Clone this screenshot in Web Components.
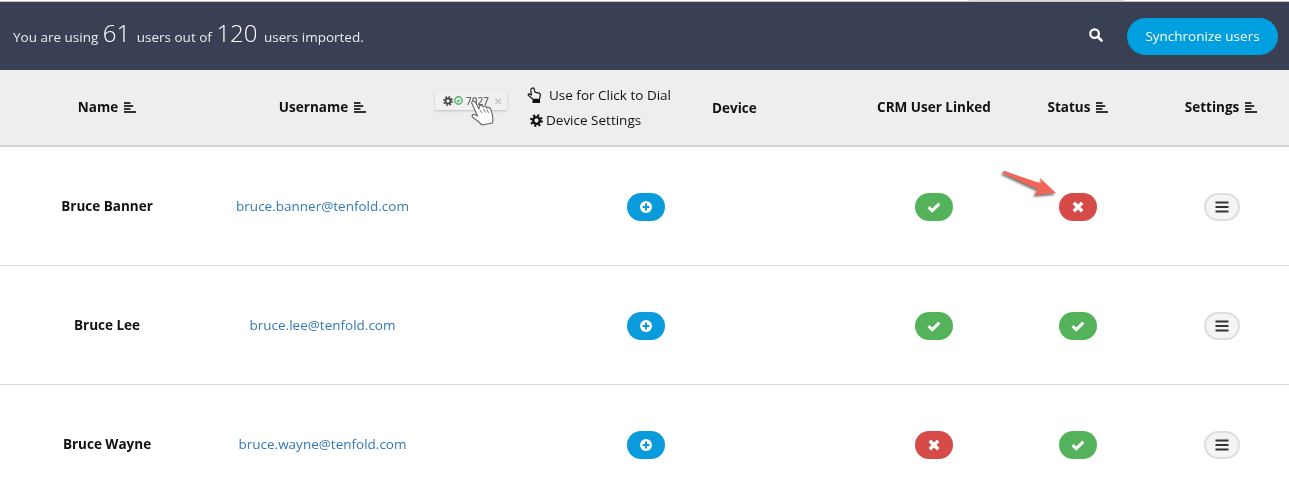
<!DOCTYPE html>
<html lang="en">
<head>
<meta charset="utf-8">
<title>Users</title>
<style>
  html, body { margin: 0; background: #fff; }
  body { filter: blur(.35px); font-family: "Open Sans", sans-serif; height: 481px; overflow: hidden; }
</style>
</head>
<body>
<users-banner used="61" total="120"></users-banner>
<users-head></users-head>
<user-row name="Bruce Banner" email="bruce.banner@tenfold.com" crm="ok" status="off" arrow></user-row>
<user-row name="Bruce Lee" email="bruce.lee@tenfold.com" crm="ok" status="ok"></user-row>
<user-row name="Bruce Wayne" email="bruce.wayne@tenfold.com" crm="off" status="ok"></user-row>

<script>
const COLUMNS = '214px 217px 430px 146px 142px 140px'

const GEAR = (size, color) => /* html */`
  <svg width="${size}" height="${size}" viewBox="0 0 14 14" aria-hidden="true">
    <circle cx="7" cy="7" r="3.6" fill="none" stroke="${color}" stroke-width="2.6"/>
    <circle cx="7" cy="7" r="5.7" fill="none" stroke="${color}" stroke-width="2.4" stroke-dasharray="2.24 2.24"/>
  </svg>`

class SortIcon extends HTMLElement {
  constructor () {
    super()
    this.attachShadow({ mode: 'open' }).innerHTML = /* html */`
    <style>
      :host{ display: inline-flex; margin-left: 6px; }
    </style>
    <svg width="12" height="11" viewBox="0 0 13 11" preserveAspectRatio="none" aria-hidden="true">
      <path fill="#333" d="M0 0h7v2H0zM0 3h10v2H0zM0 6h7v2H0zM0 9h13v2H0z"/>
    </svg>`
  }
}

class PillButton extends HTMLElement {
  constructor () {
    super()
    this.attachShadow({ mode: 'open' })
  }

  connectedCallback () {
    const icons = {
      add: '<circle cx="8" cy="8" r="6"  fill="#fff"/><path fill="#0a9bdc" d="M7 4.600h2V7h2.400v2H9v2.400H7V9H4.600V7H7z"/>',
      ok: '<path fill="none" stroke="#fff" stroke-width="3" d="M2.600 8.200l3.600 3.400 7.200-7"/>',
      off: '<path fill="none" stroke="#fff" stroke-width="3.400" d="M3.800 3.800l8.400 8.400M12.200 3.800l-8.400 8.400"/>',
      menu: '<path fill="#333" d="M1.500 2.600h13v2h-13zM1.500 7h13v2h-13zM1.500 11.400h13v2h-13z"/>'
    }
    this.shadowRoot.innerHTML = /* html */`
    <style>
      :host{
        align-items: center;
        background: var(--pill-bg, #54b35a);
        border: var(--pill-border, 0);
        border-radius: 14px;
        box-sizing: border-box;
        display: inline-flex;
        height: 28px;
        justify-content: center;
        width: var(--pill-width, 38px);
      }
      :host([kind="add"]){ --pill-bg: #0a9bdc; }
      :host([kind="off"]){ --pill-bg: #d64a47; }
      :host([kind="menu"]){ --pill-bg: #f4f4f4; --pill-border: 2px solid #dedede; --pill-width: 36px; }
      svg{ display: block; }
    </style>
    <svg width="16" height="16" viewBox="0 0 16 16" aria-hidden="true">${icons[this.getAttribute('kind')]}</svg>`
  }
}

class UsersBanner extends HTMLElement {
  constructor () {
    super()
    this.attachShadow({ mode: 'open' })
  }

  connectedCallback () {
    this.shadowRoot.innerHTML = /* html */`
    <style>
      :host{
        align-items: center;
        background: #3a4053;
        border-top: 1px solid #c4c5ca;
        box-sizing: border-box;
        color: #e9ebef;
        display: flex;
        font-size: 13.5px;
        height: 69px;
        margin-top: 1px;
        padding: 0 11px 0 13px;
        position: relative;
      }
      .tab{ background: #dcdcd8; height: 1px; left: 969px; position: absolute; top: -2px; width: 155px; }
      p{ margin: 0 0 7px; }
      b{ color: #fff; font-size: 24px; font-weight: 300; margin: 0 3px 0 1px; }
      .search{ display: block; margin: 0 24px 3px auto; }
      button{
        background: #009fdf;
        border: 0;
        border-radius: 19px;
        color: #fff;
        font: 13.5px "Open Sans", sans-serif;
        height: 37px;
        padding: 0;
        width: 151px;
      }
    </style>
    <span class="tab"></span>
    <p>You are using <b>${this.getAttribute('used')}</b> users out of <b>${this.getAttribute('total')}</b> users imported.</p>
    <svg class="search" width="14" height="14" viewBox="0 0 14 14" aria-hidden="true">
      <circle cx="5.600" cy="5.600" r="4.300" fill="none" stroke="#fff" stroke-width="2.200"/>
      <path stroke="#fff" stroke-width="2.600" stroke-linecap="round" d="M9 9l3.600 3.600"/>
    </svg>
    <button>Synchronize users</button>`
  }
}

class UsersHead extends HTMLElement {
  constructor () {
    super()
    this.attachShadow({ mode: 'open' })
  }

  connectedCallback () {
    this.shadowRoot.innerHTML = /* html */`
    <style>
      :host{
        align-items: center;
        background: #eeeeee;
        border-bottom: 2px solid #d4d4d4;
        box-sizing: border-box;
        color: #111;
        display: grid;
        font-size: 13.5px;
        font-weight: 700;
        grid-template-columns: ${COLUMNS};
        height: 77px;
      }
      .th{ align-items: center; display: flex; justify-content: center; margin-top: -1px; }
      .settings{ padding-left: 4px; }
      .dial{ align-items: center; display: flex; font-weight: 400; padding-left: 4px; }
      .chip{
        align-items: center;
        background: #f1f1f1;
        box-shadow: 0 1px 2px #bdbdbd;
        box-sizing: border-box;
        color: #666;
        display: flex;
        font-size: 10px;
        font-weight: 600;
        gap: 1px;
        height: 18px;
        padding-left: 8px;
        position: relative;
        top: -7px;
        width: 72px;
      }
      .chip .x{ color: #c4c4c4; font-size: 10px; margin-left: 4px; }
      .hand{ left: 35px; position: absolute; top: 8px; }
      .dial-text{ display: flex; flex-direction: column; gap: 6px; margin-left: 20px; }
      .line{ align-items: center; display: flex; height: 19px; }
      .device{ font-weight: 700; margin-left: 41px; }
    </style>
    <div class="th">Name<sort-icon></sort-icon></div>
    <div class="th">Username<sort-icon></sort-icon></div>
    <div class="dial">
      <div class="chip">
        ${GEAR(10, '#444')}
        <svg width="9" height="9" viewBox="0 0 9 9" aria-hidden="true">
          <circle cx="4.500" cy="4.500" r="3.700" fill="none" stroke="#4fb06b" stroke-width="1.400"/>
          <path fill="none" stroke="#4fb06b" stroke-width="1.200" d="M2.800 4.600l1.300 1.200 2.100-2.200"/>
        </svg>
        <span style="margin-left:2px">7027</span><span class="x">&#10005;</span>
        <svg class="hand" width="24" height="26" viewBox="0 0 24 26" aria-hidden="true">
          <path fill="#fff" stroke="#666" stroke-width="1.100" stroke-linejoin="round" d="M1.500 2.500C2.500.5 4.500.8 5.500 2.500L9 9l.5-3C11 4.500 12.500 5 13 7l.5-.5C15 5.500 16.500 6 17 8l.5-.5C19 7 20.500 8 21 10c1.500 4 2.500 8 1.500 13L12 25C9 22 7 20 3 17.500 1.500 16.500 2 14 4.500 14.500L7.500 16z"/>
          <path fill="none" stroke="#666" stroke-width=".9" d="M10 10l2 3M13.500 9l2 3.500M17 9.500l1.500 3.500"/>
        </svg>
      </div>
      <div class="dial-text">
        <div class="line">
          <svg width="15" height="17" viewBox="0 0 15 17" aria-hidden="true">
            <path fill="none" stroke="#111" stroke-width="1.200" stroke-linejoin="round" d="M5 1.200c1-.6 2 0 2.200 1l.7 3 4 .9c1 .3 1.700 1 1.500 2l-1 4.200H6L1.300 8.400c-.5-.8.4-1.800 1.400-1.300L4.400 8 3.800 2.800c-.1-.7.500-1.300 1.200-1.600z"/>
            <path fill="#111" d="M5.500 13h7.500v3H5.500z"/>
          </svg>
          <span style="margin-left:7px">Use for Click to Dial</span>
        </div>
        <div class="line">
          <span style="display:flex;margin:0 3px 0 3px">${GEAR(13, '#111')}</span>
          <span>Device Settings</span>
        </div>
      </div>
      <span class="device">Device</span>
    </div>
    <div class="th">CRM User Linked</div>
    <div class="th">Status<sort-icon></sort-icon></div>
    <div class="th settings">Settings<sort-icon></sort-icon></div>`
  }
}

class UserRow extends HTMLElement {
  constructor () {
    super()
    this.attachShadow({ mode: 'open' })
  }

  connectedCallback () {
    const arrow = this.hasAttribute('arrow')
      ? /* html */`
      <svg class="arrow" width="60" height="30" viewBox="0 0 60 30" aria-hidden="true">
        <path fill="#f2665a" d="M1 3l2-2.200L40 13.500 39 8l16 15-22 2 4-5.500z"/>
      </svg>`
      : ''
    this.shadowRoot.innerHTML = /* html */`
    <style>
      :host{
        align-items: center;
        border-bottom: 1px solid #dcdcdc;
        box-sizing: border-box;
        color: #111;
        display: grid;
        font-size: 13.5px;
        grid-template-columns: ${COLUMNS};
        height: 119px;
        position: relative;
      }
      .td{ display: flex; justify-content: center; }
      .pill{ padding-top: 2px; }
      .name{ font-weight: 700; }
      a{ color: #337ab7; text-decoration: none; }
      .settings{ box-sizing: border-box; padding-left: 6px; }
      .arrow{ filter: drop-shadow(-1px 2px 1px #777); left: 1001px; position: absolute; top: 23px; }
    </style>
    <div class="td name">${this.getAttribute('name')}</div>
    <div class="td"><a href="#">${this.getAttribute('email')}</a></div>
    <div class="td pill"><pill-button kind="add"></pill-button></div>
    <div class="td pill"><pill-button kind="${this.getAttribute('crm')}"></pill-button></div>
    <div class="td pill"><pill-button kind="${this.getAttribute('status')}"></pill-button></div>
    <div class="td pill settings"><pill-button kind="menu"></pill-button></div>
    ${arrow}`
  }
}

customElements.define('sort-icon', SortIcon)
customElements.define('pill-button', PillButton)
customElements.define('users-banner', UsersBanner)
customElements.define('users-head', UsersHead)
customElements.define('user-row', UserRow)
</script>
</body>
</html>
